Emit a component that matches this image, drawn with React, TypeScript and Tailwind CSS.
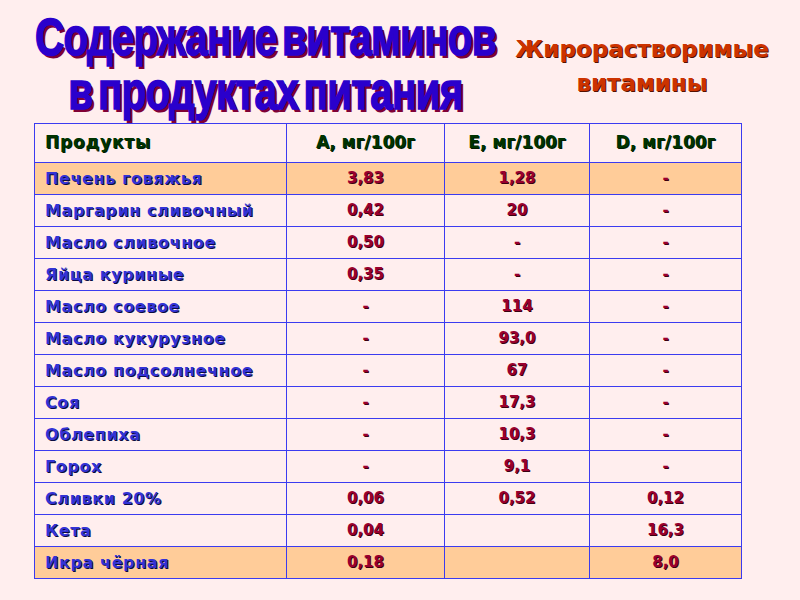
const rows: { name: string; a: string; e: string; d: string; hl?: boolean }[] = [
  { name: "Печень говяжья", a: "3,83", e: "1,28", d: "-", hl: true },
  { name: "Маргарин сливочный", a: "0,42", e: "20", d: "-" },
  { name: "Масло сливочное", a: "0,50", e: "-", d: "-" },
  { name: "Яйца куриные", a: "0,35", e: "-", d: "-" },
  { name: "Масло соевое", a: "-", e: "114", d: "-" },
  { name: "Масло кукурузное", a: "-", e: "93,0", d: "-" },
  { name: "Масло подсолнечное", a: "-", e: "67", d: "-" },
  { name: "Соя", a: "-", e: "17,3", d: "-" },
  { name: "Облепиха", a: "-", e: "10,3", d: "-" },
  { name: "Горох", a: "-", e: "9,1", d: "-" },
  { name: "Сливки 20%", a: "0,06", e: "0,52", d: "0,12" },
  { name: "Кета", a: "0,04", e: "", d: "16,3" },
  { name: "Икра чёрная", a: "0,18", e: "", d: "8,0", hl: true },
];

const cell = "border border-[#3b3bf0] px-[10px]";
const num =
  "text-center text-[15px] font-bold text-[#99002e] [text-shadow:1px_1px_0_#3a0010]";
const title =
  "inline-block whitespace-nowrap scale-x-[0.81] scale-y-[1.05] text-[50px] tracking-[-1px] [word-spacing:-6px] [-webkit-text-stroke:1.5px_#2a00cc]";

export default function App() {
  return (
    <div className="h-[600px] w-[800px] overflow-hidden bg-[#ffeeee] font-['DejaVu_Sans',Verdana,sans-serif]">
      <header className="flex h-[123px]">
        <div className="flex w-[500px] flex-col items-center pl-[30px] pt-[12px] font-['Liberation_Sans',Arial,sans-serif] font-bold leading-none text-[#2a00cc] [text-shadow:3px_3px_0_#800035]">
          <span className={title}>Содержание витаминов</span>
          <span className={`mt-[4px] ${title}`}>в продуктах питания</span>
        </div>
        <div className="flex w-[284px] flex-col items-center whitespace-nowrap pt-[32px] text-[23px] font-bold leading-[34px] text-[#cc3300] [text-shadow:1px_1px_0_#551100]">
          <span>Жирорастворимые</span>
          <span>витамины</span>
        </div>
      </header>

      <table className="ml-[34px] w-[707px] table-fixed border-collapse">
        <colgroup>
          <col className="w-[252px]" />
          <col className="w-[158px]" />
          <col className="w-[145px]" />
          <col className="w-[152px]" />
        </colgroup>
        <thead>
          <tr className="h-[39px] text-[17px] font-bold text-[#003300] [text-shadow:1px_1px_0_#001a00]">
            <th className={`${cell} text-left tracking-[0.8px]`}>Продукты</th>
            <th className={`${cell} text-center`}>А, мг/100г</th>
            <th className={`${cell} text-center`}>Е, мг/100г</th>
            <th className={`${cell} text-center`}>D, мг/100г</th>
          </tr>
        </thead>
        <tbody>
          {rows.map((r) => (
            <tr key={r.name} className={`h-[32px] ${r.hl ? "bg-[#ffcc99]" : ""}`}>
              <td className={`${cell} whitespace-nowrap text-[16px] font-bold tracking-[0.6px] text-[#3333d6] [text-shadow:1px_1px_0_#0a0a40]`}>
                {r.name}
              </td>
              <td className={`${cell} ${num}`}>{r.a}</td>
              <td className={`${cell} ${num}`}>{r.e}</td>
              <td className={`${cell} ${num}`}>{r.d}</td>
            </tr>
          ))}
        </tbody>
      </table>
    </div>
  );
}
